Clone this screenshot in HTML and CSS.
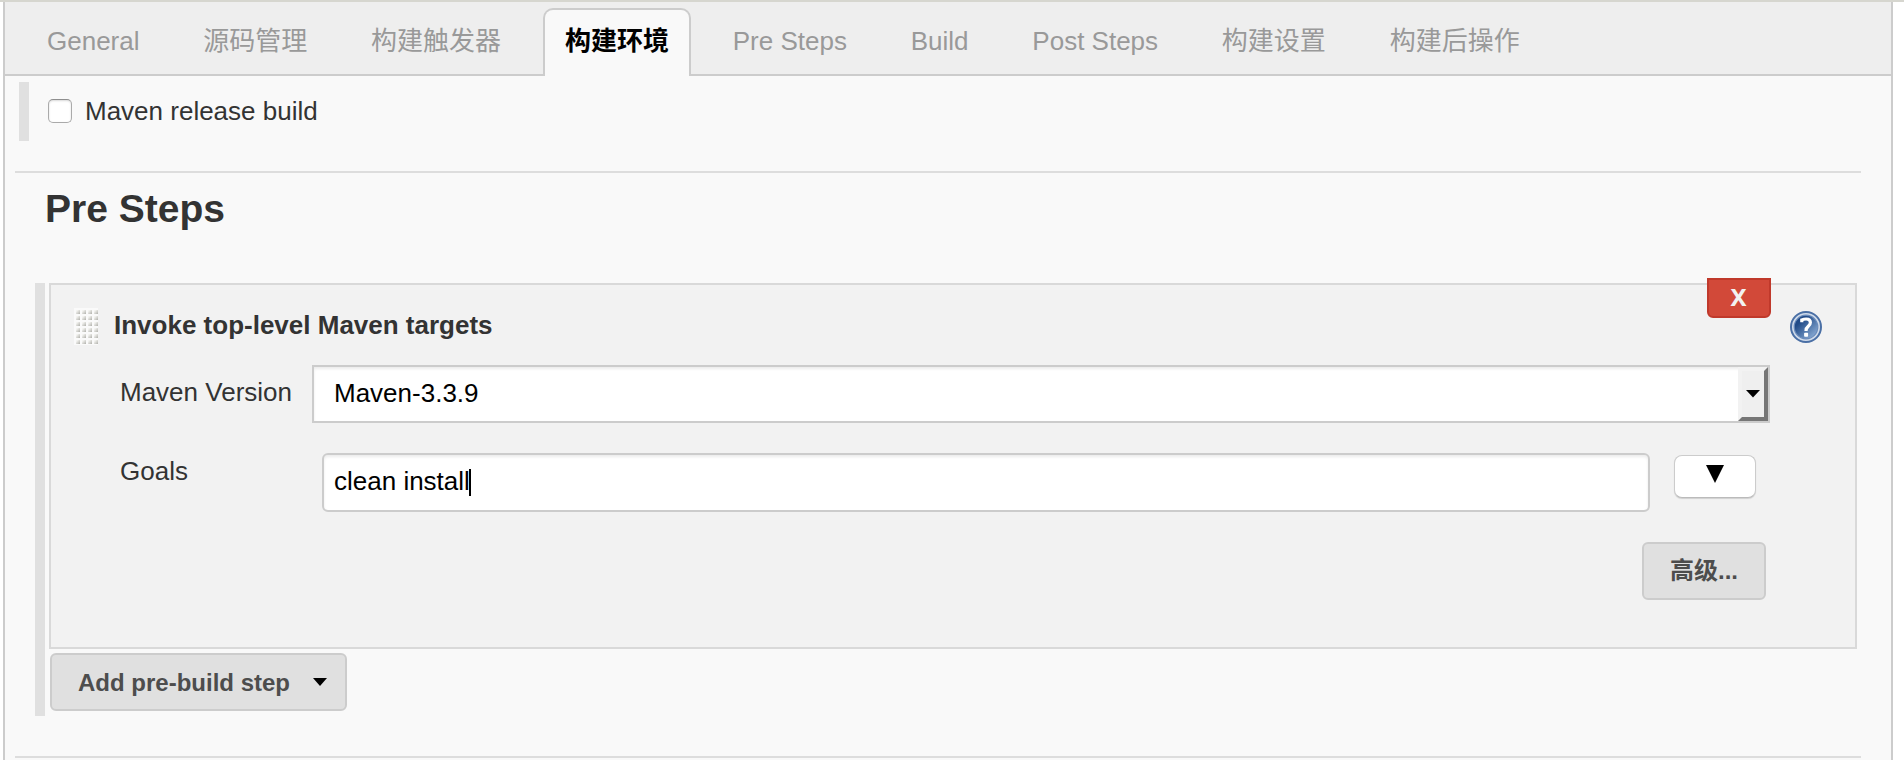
FILE: index.html
```html
<!DOCTYPE html>
<html lang="zh-CN">
<head>
<meta charset="utf-8">
<title>Pre Steps</title>
<link rel="stylesheet" href="styles.css">
</head>
<body>
<div class="top-rule"></div>
<main class="frame">
  <nav class="tabs">
    <a class="tab">General</a>
    <a class="tab">源码管理</a>
    <a class="tab">构建触发器</a>
    <a class="tab active">构建环境</a>
    <a class="tab">Pre Steps</a>
    <a class="tab">Build</a>
    <a class="tab">Post Steps</a>
    <a class="tab">构建设置</a>
    <a class="tab">构建后操作</a>
  </nav>

  <div class="option">
    <span class="checkbox"></span>
    <span class="option-label">Maven release build</span>
  </div>
  <div class="divider first"></div>

  <h2 class="heading">Pre Steps</h2>

  <section class="steps">
    <div class="step">
      <button class="delete">X</button>
      <div class="step-head">
        <svg class="grip" width="24" height="37" viewBox="0 0 24 37">
          <defs>
            <linearGradient id="dot" x1="0" y1="0" x2="1" y2="1">
              <stop offset="0.2" stop-color="#f4f4f1"/>
              <stop offset="1" stop-color="#b0b0ab"/>
            </linearGradient>
            <pattern id="dots" x="1" y="1" width="6" height="6" patternUnits="userSpaceOnUse">
              <rect x="1" y="1" width="4" height="4" fill="url(#dot)"/>
            </pattern>
          </defs>
          <rect width="24" height="37" fill="#fafafa"/>
          <rect x="1" y="1" width="23" height="36" fill="url(#dots)"/>
        </svg>
        <h3 class="step-title">Invoke top-level Maven targets</h3>
        <svg class="help" width="32" height="32" viewBox="0 0 32 32">
          <defs>
            <linearGradient id="ball" x1="0.1" y1="0.1" x2="0.9" y2="0.95">
              <stop offset="0.2" stop-color="#204a87"/>
              <stop offset="1" stop-color="#8fb0d8"/>
            </linearGradient>
          </defs>
          <circle cx="16" cy="16" r="15" fill="#d0dbea" stroke="#4a6fa5" stroke-width="2"/>
          <circle cx="16" cy="16" r="11.8" fill="url(#ball)" stroke="#6a8bbb" stroke-width="1.2"/>
          <path d="M11.8 11.2V8.9Q13.8 8 16.2 8Q20.4 8 20.4 11.6Q20.4 13.8 18.2 15.4Q16 17 16 20" fill="none" stroke="#fff" stroke-width="3.2"/>
          <rect x="14.1" y="21.8" width="4" height="4" rx="0.8" fill="#fff"/>
        </svg>
      </div>

      <div class="row version">
        <span class="label">Maven Version</span>
        <div class="select">
          <span>Maven-3.3.9</span>
          <span class="select-arrow">
            <svg width="14" height="8" viewBox="0 0 14 8"><path d="M0 0H14L7 7.5Z"/></svg>
          </span>
        </div>
      </div>

      <div class="row goals">
        <span class="label">Goals</span>
        <div class="input"><span>clean install</span><i class="caret"></i></div>
        <button class="expand">
          <svg width="18" height="18" viewBox="0 0 18 18"><path d="M0 0H18L9 18Z"/></svg>
        </button>
      </div>

      <div class="row actions">
        <button class="btn advanced">高级...</button>
      </div>
    </div>

    <button class="btn add">
      <span>Add pre-build step</span>
      <svg width="14" height="8" viewBox="0 0 14 8"><path d="M0 0H14L7 8Z"/></svg>
    </button>
  </section>
  <div class="divider last"></div>
</main>
</body>
</html>
```
FILE: styles.css
```css
* {
  box-sizing: border-box;
}

body {
  margin: 0;
  height: 760px;
  overflow: hidden;
  display: flex;
  flex-direction: column;
  background: #fff;
  color: #333;
  font: 26px/36px "Liberation Sans", "Noto Sans CJK SC", sans-serif;
}

button {
  margin: 0;
  padding: 0;
  font: inherit;
}

.top-rule {
  height: 2px;
  flex: none;
  background: #d6d6cf;
}

.frame {
  flex: 1;
  min-height: 0;
  margin: 0 11px 0 3px;
  border: solid #ccc;
  border-width: 0 2px;
  background: #f9f9f9;
}

/* Tabs */
.tabs {
  display: flex;
  align-items: flex-end;
  gap: 19.8px;
  height: 74px;
  padding-left: 20px;
  border-bottom: 2px solid #ccc;
  background: #eee;
}

.tab {
  height: 68px;
  margin-bottom: -2px;
  padding: 0 20px;
  border: 2px solid transparent;
  border-bottom: 0;
  line-height: 63px;
  color: #999;
  white-space: nowrap;
}

.tab.active {
  border-color: #ccc;
  border-radius: 10px 10px 0 0;
  background: #f9f9f9;
  color: #000;
  font-weight: bold;
}

/* Release build option */
.option {
  display: flex;
  height: 59px;
  margin: 6px 0 0 14px;
  padding: 17px 0 0 19px;
  border-left: 10px solid #e0e0e0;
}

.checkbox {
  width: 24px;
  height: 24px;
  border: 1px solid #aaa;
  border-top-color: #8e8e8e;
  border-radius: 5px;
  background: #fff;
  box-shadow: inset 0 1px 2px rgba(0, 0, 0, 0.15);
}

.option-label {
  margin-left: 13px;
  line-height: 24px;
}

.divider {
  height: 2px;
  margin-left: 10px;
  margin-right: 30px;
  background: #ddd;
}

.first {
  margin-top: 30px;
}

.last {
  margin-top: 40px;
}

.heading {
  margin: 0 0 39px 40px;
  font-size: 39px;
  line-height: 71px;
}

/* Build steps */
.steps {
  height: 433px;
  margin: 0 34px 0 30px;
  padding-left: 4px;
  border-left: 10px solid #e0e0e0;
}

.step {
  position: relative;
  height: 366px;
  border: 2px solid #d9d9d9;
  background: #f2f2f2;
}

.delete {
  position: absolute;
  top: -7px;
  right: 84px;
  width: 64px;
  height: 40px;
  padding-right: 1px;
  border: 2px solid #c0392b;
  border-radius: 0 0 6px 6px;
  background: #d24939;
  color: #f2f2f2;
  font: bold 24px/32px "Noto Sans", sans-serif;
}

.delete::first-line {
  line-height: 32px;
}

.delete {
  padding-bottom: 3px;
}

.step-head {
  display: flex;
  align-items: flex-start;
  padding: 23px 33px 0 23px;
}

.step-title {
  margin: 0 0 0 16px;
  font-size: 26px;
  line-height: 34px;
}

.help {
  margin: 3px 0 0 auto;
}

.row {
  display: flex;
  align-items: flex-start;
  padding-left: 69px;
}

.version {
  margin-top: 20px;
}

.version .label {
  width: 192px;
  line-height: 54px;
}

.select {
  display: flex;
  justify-content: space-between;
  width: 1458px;
  height: 58px;
  padding-left: 20px;
  border: 2px solid #ccc;
  background: #fff;
  box-shadow: inset 0 2px 3px rgba(0, 0, 0, 0.08);
  color: #000;
  line-height: 52px;
}

.select-arrow {
  display: flex;
  align-items: center;
  justify-content: center;
  width: 30px;
  height: 54px;
  border: 4px solid;
  border-color: #f2f2f2 #767676 #767676 #f2f2f2;
  background: #efefef;
}

.goals {
  margin-top: 30px;
}

.goals .label {
  width: 202px;
}

.input {
  display: flex;
  width: 1328px;
  height: 59px;
  padding-left: 10px;
  border: 2px solid #ccc;
  border-radius: 6px;
  background: #fff;
  box-shadow: inset 0 2px 3px rgba(0, 0, 0, 0.08);
  color: #000;
  line-height: 52px;
}

.caret {
  width: 2px;
  height: 27px;
  margin: 14px 0 0 -1px;
  background: #000;
}

.expand {
  display: flex;
  justify-content: center;
  width: 82px;
  height: 43px;
  margin: 2px 0 0 24px;
  padding-top: 9px;
  border: 1px solid #ccc;
  border-bottom-color: #bbb;
  border-radius: 8px;
  background: #fff;
  box-shadow: 0 1px 1px rgba(0, 0, 0, 0.14);
}

.actions {
  justify-content: flex-end;
  margin-top: 30px;
  padding-right: 89px;
}

.btn {
  height: 58px;
  border: 2px solid #ccc;
  border-radius: 6px;
  background: #e0e0e0;
  color: #4d4d4d;
  font-size: 24px;
  font-weight: bold;
}

.advanced {
  width: 124px;
  line-height: 52px;
}

.add {
  display: flex;
  align-items: center;
  gap: 23px;
  width: 297px;
  margin: 4px 0 0 1px;
  padding-left: 26px;
}

.add span {
  padding-top: 2px;
}
```
